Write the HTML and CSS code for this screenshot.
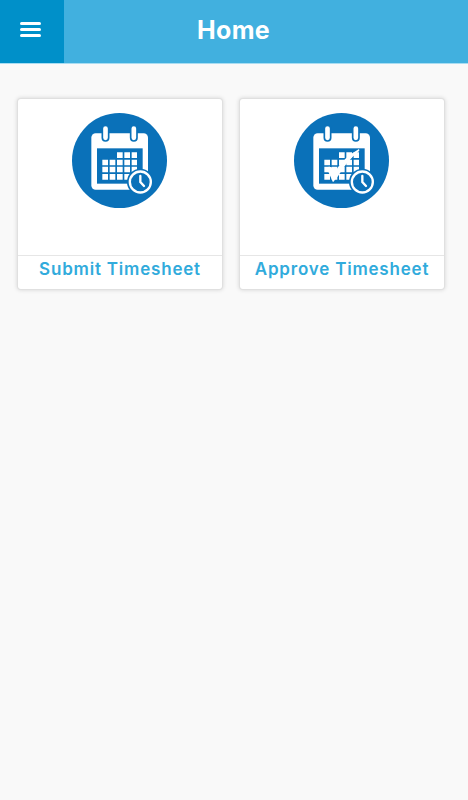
FILE: index.html
```html
<!DOCTYPE html>
<html lang="en">
<head>
    <meta charset="UTF-8">
    <meta name="viewport" content="width=device-width, initial-scale=1.0">
    <title>Home</title>
    <link rel="stylesheet" href="styles.css">
</head>
<body>
    <header>
        <button class="menu-button" aria-label="Menu">
            <span></span>
            <span></span>
            <span></span>
        </button>
        <h1>Home</h1>
    </header>

    <main class="tiles">
        <a class="tile" href="#">
            <div class="tile-icon">
                <svg width="95" height="95" viewBox="23 21 285 285">
                    <circle cx="165.500" cy="163.500" r="142.500" fill="#0A71B9"/>
                    <!-- Calendar -->
                    <rect x="81" y="82" width="170" height="169" rx="13" fill="#fff"/>
                    <rect x="98" y="127" width="137" height="106" fill="#0A71B9"/>
                    <rect x="114" y="58" width="19" height="47" rx="9.500" fill="#fff" stroke="#0A71B9" stroke-width="5"/>
                    <rect x="199" y="58" width="19" height="47" rx="9.500" fill="#fff" stroke="#0A71B9" stroke-width="5"/>
                    <!-- Days -->
                    <path fill="#fff" d="M158 139h17v17h-17zM180 139h17v17h-17zM202 139h16v17h-16zM114 161h17v17h-17zM136 161h17v17h-17zM158 161h17v17h-17zM180 161h17v17h-17zM202 161h16v17h-16zM114 182h17v17h-17zM136 182h17v17h-17zM158 182h17v17h-17zM180 182h17v17h-17zM202 182h16v17h-16zM114 204h17v17h-17zM136 204h17v17h-17zM158 204h17v17h-17zM180 204h17v17h-17z"/>
                    <!-- Clock -->
                    <circle cx="228" cy="228" r="40" fill="#0A71B9"/>
                    <circle cx="228" cy="228" r="31.500" fill="#0A71B9" stroke="#fff" stroke-width="7"/>
                    <path d="M228 210v18l11 12" fill="none" stroke="#fff" stroke-width="7" stroke-linecap="round"/>
                </svg>
            </div>
            <div class="tile-title">Submit Timesheet</div>
        </a>

        <a class="tile" href="#">
            <div class="tile-icon">
                <svg width="95" height="95" viewBox="23 21 285 285">
                    <circle cx="165.500" cy="163.500" r="142.500" fill="#0A71B9"/>
                    <!-- Calendar -->
                    <rect x="81" y="82" width="170" height="169" rx="13" fill="#fff"/>
                    <rect x="98" y="127" width="137" height="106" fill="#0A71B9"/>
                    <rect x="114" y="58" width="19" height="47" rx="9.500" fill="#fff" stroke="#0A71B9" stroke-width="5"/>
                    <rect x="199" y="58" width="19" height="47" rx="9.500" fill="#fff" stroke="#0A71B9" stroke-width="5"/>
                    <!-- Days -->
                    <path fill="#fff" d="M158 139h17v17h-17zM180 139h17v17h-17zM202 139h16v17h-16zM114 161h17v17h-17zM136 161h17v17h-17zM158 161h17v17h-17zM180 161h17v17h-17zM202 161h16v17h-16zM114 182h17v17h-17zM136 182h17v17h-17zM158 182h17v17h-17zM180 182h17v17h-17zM202 182h16v17h-16zM114 204h17v17h-17zM136 204h17v17h-17zM158 204h17v17h-17zM180 204h17v17h-17z"/>
                    <!-- Check mark -->
                    <path fill="#fff" d="M120 184q15-5 21 5l4 9q27-44 73-69l1 5q-40 34-63 75l-16 20z"/>
                    <!-- Clock -->
                    <circle cx="228" cy="228" r="40" fill="#0A71B9"/>
                    <circle cx="228" cy="228" r="31.500" fill="#0A71B9" stroke="#fff" stroke-width="7"/>
                    <path d="M228 210v18l11 12" fill="none" stroke="#fff" stroke-width="7" stroke-linecap="round"/>
                </svg>
            </div>
            <div class="tile-title">Approve Timesheet</div>
        </a>
    </main>
</body>
</html>
```

FILE: styles.css
```css
body {
    font-family: Inter, "Open Sans", sans-serif;
    margin: 0;
    padding: 0;
    background-color: #F9F9F9;
}

header {
    display: grid;
    grid-template-columns: 64px 1fr 64px;
    height: 63px;
    background-color: #41B0DF;
    border-bottom: 1px solid #A9DDF2;
}

.menu-button {
    display: flex;
    flex-direction: column;
    align-items: flex-start;
    gap: 3px;
    padding: 22px 0 0 20px;
    border: none;
    background-color: #0090C9; /* Darker blue behind the menu icon */
    cursor: pointer;
}

.menu-button span {
    width: 21px;
    height: 3px;
    border-radius: 2px;
    background-color: white;
}

h1 {
    margin: 0;
    padding-right: 1px;
    color: white;
    font-size: 25px;
    font-weight: 700;
    line-height: 61px;
    letter-spacing: 0.3px;
    text-align: center;
}

.tiles {
    display: grid;
    grid-template-columns: 204px 204px;
    gap: 18px;
    padding: 35px 18px;
}

.tile {
    display: flex;
    flex-direction: column;
    height: 190px;
    border-radius: 3px;
    background-color: white;
    box-shadow: 0 0 0 1px #E0E0E0, 0 0 4px 1px rgba(0, 0, 0, 0.15);
    text-decoration: none;
}

.tile-icon {
    height: 156px;
    padding: 14px 0 0 54px;
    box-sizing: border-box;
}

.tile-icon svg {
    display: block;
}

.tile-title {
    border-top: 1px solid #E6E6E6;
    color: #31ABDC;
    font-size: 17px;
    font-weight: 600;
    line-height: 27px;
    letter-spacing: 0.8px;
    text-align: center;
}
```
